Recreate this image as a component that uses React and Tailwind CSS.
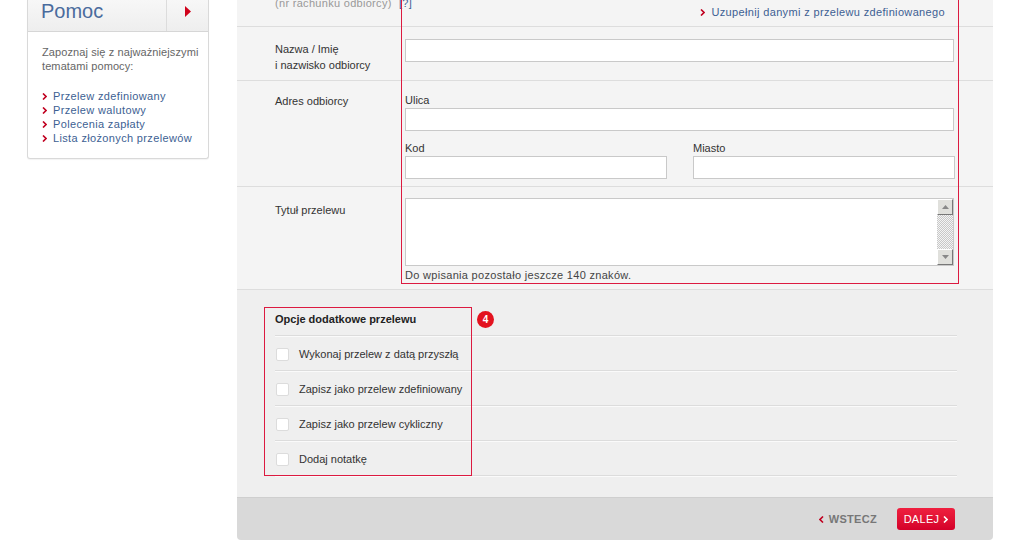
import React from 'react'

const font = { fontFamily: '"Liberation Sans", Arial, sans-serif' }

function Chevron({ className = '' }) {
  return (
    <svg width="5" height="7" viewBox="0 0 5 7" className={className}>
      <path d="M1 0.5 L4 3.5 L1 6.5" fill="none" stroke="currentColor" strokeWidth="1.6" />
    </svg>
  )
}

function Sidebar() {
  const links = ['Przelew zdefiniowany', 'Przelew walutowy', 'Polecenia zapłaty', 'Lista złożonych przelewów']
  return (
    <div className="w-[182px] ml-[27px] shrink-0 border border-t-0 border-[#d9d9d9] rounded-b-[3px] bg-white self-start shadow-[0_1px_1px_rgba(0,0,0,0.05)]">
      <div className="flex h-[32px] border-b border-[#d6d6d6] bg-gradient-to-b from-[#f7f7f7] to-[#eeeeee]">
        <div className="w-[139px] border-r border-[#dcdcdc] pl-[13px] text-[20px] leading-[20px] text-[#4a6b9d] pt-[1px]">
          Pomoc
        </div>
        <div className="flex-1 flex items-center justify-center pb-[8px]">
          <svg width="6" height="11" viewBox="0 0 6 11">
            <path d="M0 0 L6 5.5 L0 11 Z" fill="#d0021b" />
          </svg>
        </div>
      </div>
      <div className="pl-[14px] pr-[4px] pt-[13px] pb-[13px]">
        <p className="text-[11px] leading-[14px] text-[#666] whitespace-nowrap tracking-[0.1px]">
          Zapoznaj się z najważniejszymi
          <br />
          tematami pomocy:
        </p>
        <ul className="mt-[16px]">
          {links.map((l) => (
            <li key={l} className="flex items-center gap-[6px] h-[14px] text-[11px] text-[#3d5f93] tracking-[0.35px] whitespace-nowrap">
              <Chevron className="text-[#c00020]" />
              <span>{l}</span>
            </li>
          ))}
        </ul>
      </div>
    </div>
  )
}

function Input({ className = '' }) {
  return <div className={`h-[23px] bg-white border border-[#c9c9c9] ${className}`} />
}

function Checkbox() {
  return <div className="w-[13px] h-[13px] bg-white border border-[#dcdcdc] rounded-[2px]" />
}

function MainPanel() {
  const options = [
    'Wykonaj przelew z datą przyszłą',
    'Zapisz jako przelew zdefiniowany',
    'Zapisz jako przelew cykliczny',
    'Dodaj notatkę',
  ]
  return (
    <div className="w-[756px] ml-[28px] shrink-0 relative text-[11px] text-[#333]">
      {/* top form section */}
      <div className="bg-[#f4f4f4]">
        <div className="h-[27px] border-b border-[#dddddd] relative">
          <div className="flex justify-between pl-[38px] pr-[48px]">
            <span className="text-[#999] -mt-[5px] tracking-[0.3px]">
              (nr rachunku odbiorcy) <span className="text-[#3d5f93] ml-[4px]">[?]</span>
            </span>
            <span className="flex items-center gap-[6px] mt-[4px] text-[#3d5f93] tracking-[0.35px]">
              <Chevron className="text-[#c00020]" />
              Uzupełnij danymi z przelewu zdefiniowanego
            </span>
          </div>
        </div>

        <div className="h-[54px] border-b border-[#dddddd] flex">
          <div className="w-[168px] pl-[38px] pt-[14px] leading-[16px]">
            Nazwa / Imię
            <br />i nazwisko odbiorcy
          </div>
          <div className="pt-[12px]">
            <Input className="w-[549px]" />
          </div>
        </div>

        <div className="h-[106px] border-b border-[#dddddd] flex">
          <div className="w-[168px] pl-[38px] pt-[12px]">Adres odbiorcy</div>
          <div className="pt-[12px] w-[550px]">
            <div className="h-[14px] leading-[14px]">Ulica</div>
            <Input className="w-[549px] mt-[1px]" />
            <div className="flex gap-[26px] mt-[10px]">
              <div>
                <div className="h-[14px] leading-[14px]">Kod</div>
                <Input className="w-[262px] mt-[1px]" />
              </div>
              <div>
                <div className="h-[14px] leading-[14px]">Miasto</div>
                <Input className="w-[262px] mt-[1px]" />
              </div>
            </div>
          </div>
        </div>

        <div className="h-[103px] border-b border-[#dddddd] flex">
          <div className="w-[168px] pl-[38px] pt-[15px]">Tytuł przelewu</div>
          <div className="pt-[11px]">
            <div className="w-[549px] h-[68px] bg-white border border-[#c9c9c9] flex justify-end">
              <div className="w-[16px] flex flex-col bg-[repeating-conic-gradient(#c8c8c8_0_25%,#f4f4f4_0_50%)] bg-[length:2px_2px]">
                <div className="h-[16px] bg-[#e0e0dc] border border-t-white border-l-white border-b-[#777] border-r-[#777] flex items-center justify-center">
                  <svg width="7" height="4" viewBox="0 0 7 4"><path d="M0 4 L3.5 0 L7 4 Z" fill="#888" /></svg>
                </div>
                <div className="flex-1" />
                <div className="h-[16px] bg-[#e0e0dc] border border-t-white border-l-white border-b-[#777] border-r-[#777] flex items-center justify-center">
                  <svg width="7" height="4" viewBox="0 0 7 4"><path d="M0 0 L3.5 4 L7 0 Z" fill="#888" /></svg>
                </div>
              </div>
            </div>
            <div className="mt-[1px] text-[#444] tracking-[0.3px]">Do wpisania pozostało jeszcze 140 znaków.</div>
          </div>
        </div>
      </div>

      {/* red highlight around form */}
      <div className="absolute left-[164px] top-[-20px] w-[558px] h-[304px] border border-[#dc1a40] pointer-events-none" />

      {/* options section */}
      <div className="bg-[#efefef] h-[207px] relative pt-[22px]">
        <div className="ml-[38px] mr-[36px]">
          <div className="h-[24px] flex items-start border-b border-[#dcdcdc] shadow-[0_1px_0_#fafafa] font-bold text-[#222]">
            <span className="-mt-[1px]">Opcje dodatkowe przelewu</span>
          </div>
          {options.map((o) => (
            <div key={o} className="h-[35px] flex items-center gap-[10px] border-b border-[#dcdcdc] shadow-[0_1px_0_#fafafa] pl-[1px] pt-[2px]">
              <Checkbox />
              <span>{o}</span>
            </div>
          ))}
        </div>
        <div className="absolute left-[240px] top-[21px] w-[17px] h-[17px] rounded-full bg-[#e3131f] text-white font-bold text-[10px] flex items-center justify-center">
          4
        </div>
        <div className="absolute left-[27px] top-[17px] w-[208px] h-[169px] border border-[#dc1a40] pointer-events-none" />
      </div>

      {/* footer */}
      <div className="h-[43px] bg-[#d9d9d9] border-t border-[#cfcfcf] rounded-b-[4px] flex items-center justify-end pr-[38px] gap-[20px]">
        <span className="flex items-center gap-[5px] font-bold text-[#777] tracking-[0.3px]">
          <svg width="5" height="7" viewBox="0 0 5 7">
            <path d="M4 0.5 L1 3.5 L4 6.5" fill="none" stroke="#c00020" strokeWidth="1.6" />
          </svg>
          WSTECZ
        </span>
        <span className="h-[22px] w-[58px] rounded-[3px] bg-gradient-to-b from-[#ef1f3f] to-[#d4002a] text-white flex items-center justify-center gap-[4px] tracking-[0.3px]">
          DALEJ
          <svg width="5" height="7" viewBox="0 0 5 7">
            <path d="M1 0.5 L4 3.5 L1 6.5" fill="none" stroke="#fff" strokeWidth="1.6" />
          </svg>
        </span>
      </div>
    </div>
  )
}

export default function App() {
  return (
    <div className="w-[1022px] h-[551px] bg-white overflow-hidden flex" style={font}>
      <Sidebar />
      <MainPanel />
    </div>
  )
}
